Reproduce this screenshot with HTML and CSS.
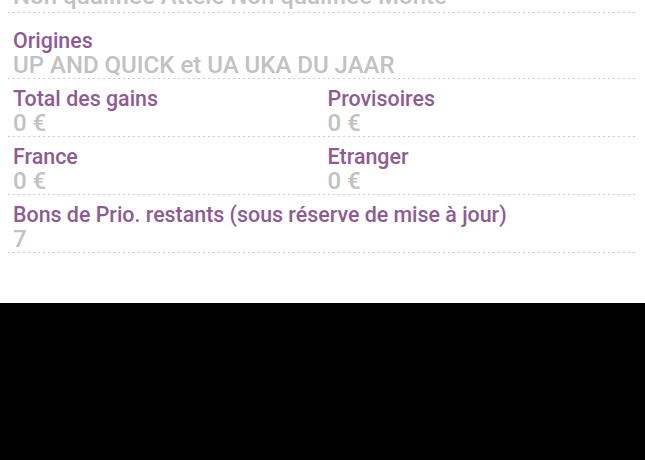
FILE: index.html
```html
<!DOCTYPE html>
<html lang="fr">
<head>
<meta charset="utf-8">
<title>Fiche</title>
<link rel="stylesheet" href="styles.css">
</head>
<body>
<main class="page">
  <section class="list">
    <div class="row row-prev">
      <div class="cell">
        <div class="value">Non qualifiée Attelé Non qualifiée Monté</div>
      </div>
    </div>
    <div class="row row-first">
      <div class="cell">
        <div class="label">Origines</div>
        <div class="value">UP AND QUICK et UA UKA DU JAAR</div>
      </div>
    </div>
    <div class="row split">
      <div class="cell">
        <div class="label">Total des gains</div>
        <div class="value">0 €</div>
      </div>
      <div class="cell">
        <div class="label">Provisoires</div>
        <div class="value">0 €</div>
      </div>
    </div>
    <div class="row split">
      <div class="cell">
        <div class="label">France</div>
        <div class="value">0 €</div>
      </div>
      <div class="cell">
        <div class="label">Etranger</div>
        <div class="value">0 €</div>
      </div>
    </div>
    <div class="row">
      <div class="cell">
        <div class="label">Bons de Prio. restants (sous réserve de mise à jour)</div>
        <div class="value">7</div>
      </div>
    </div>
  </section>
</main>
</body>
</html>
```

FILE: styles.css
```css
html, body {
  margin: 0;
  padding: 0;
  background: #000;
}

body {
  font-family: Roboto, "Liberation Sans", Arial, sans-serif;
  width: 645px;
  height: 460px;
  overflow: hidden;
}

.page {
  background: #fff;
  height: 303px;
  padding: 0 8px;
  box-sizing: border-box;
  overflow: hidden;
}

.list {
  display: flex;
  flex-direction: column;
  margin-top: -25px;
}

.row {
  display: grid;
  grid-template-columns: 1fr;
  align-content: start;
  padding: 9px 0 0;
  height: 58px;
  box-sizing: border-box;
  background-image: repeating-linear-gradient(to right, #cccccc 0 2px, transparent 2px 5px);
  background-size: 100% 1px;
  background-repeat: no-repeat;
  background-position: left bottom;
}

.row-prev {
  height: 38px;
  padding-top: 8px;
}

.row-first {
  margin-top: 8px;
}

.split {
  grid-template-columns: 1fr 1fr;
}

.cell {
  padding-left: 5px;
  display: flex;
  flex-direction: column;
}

.label {
  color: #8e5b93;
  font-size: 21.4px;
  font-weight: 500;
  line-height: 22px;
  white-space: nowrap;
}

.value {
  color: #c2c2c2;
  font-size: 24px;
  font-weight: 500;
  line-height: 26px;
  white-space: nowrap;
}
```
